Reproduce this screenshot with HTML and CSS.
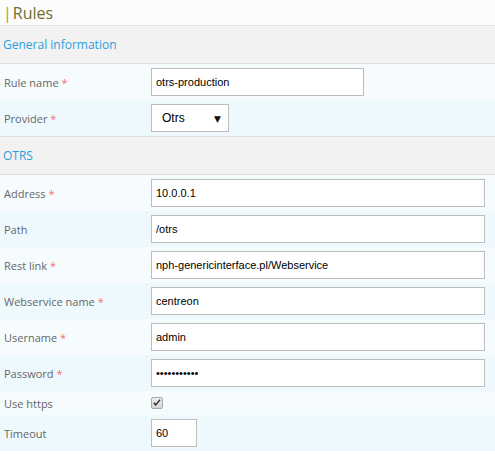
FILE: index.html
```html
<!DOCTYPE html>
<html>
<head>
<meta charset="utf-8">
<link rel="stylesheet" href="styles.css">
</head>
<body>
<div class="title"><span class="bar">|</span>Rules</div>
<div class="section">General information</div>
<div class="row odd"><label>Rule name <span class="req">*</span></label><div class="field"><input class="txt w-md" value="otrs-production"></div></div>
<div class="row even"><label>Provider <span class="req">*</span></label><div class="field"><span class="sel"><select><option>Otrs</option></select></span></div></div>
<div class="section">OTRS</div>
<div class="row odd"><label>Address <span class="req">*</span></label><div class="field"><input class="txt w-lg" value="10.0.0.1"></div></div>
<div class="row even"><label>Path</label><div class="field"><input class="txt w-lg" value="/otrs"></div></div>
<div class="row odd"><label>Rest link <span class="req">*</span></label><div class="field"><input class="txt w-lg" value="nph-genericinterface.pl/Webservice"></div></div>
<div class="row even"><label>Webservice name <span class="req">*</span></label><div class="field"><input class="txt w-lg" value="centreon"></div></div>
<div class="row odd"><label>Username <span class="req">*</span></label><div class="field"><input class="txt w-lg" value="admin"></div></div>
<div class="row even"><label>Password <span class="req">*</span></label><div class="field"><input class="txt w-lg" type="password" value="centreon123"></div></div>
<div class="row odd short"><label>Use https</label><div class="field"><span class="check"><svg viewBox="0 0 12 12" width="10" height="10"><path d="M1.5 6.5 L4.5 9.5 L10.5 2.5 L9 1.5 L4.5 7 L3 5 Z" fill="#333"/></svg></span></div></div>
<div class="row even"><label>Timeout</label><div class="field"><input class="txt w-sm" value="60"></div></div>
</body>
</html>
```

FILE: styles.css
```css
html, body {
  margin: 0;
  padding: 0;
  background: #ffffff;
}
body {
  width: 495px;
  font-family: "Open Sans", "DejaVu Sans", sans-serif;
}
.title {
  height: 26px;
  box-sizing: border-box;
  padding: 2px 0 0 3px;
  font-size: 16px;
  line-height: 22px;
  color: #6f6f2f;
  border-bottom: 1px solid #e2e2e2;
  background: #fcfcfc;
}
.title .bar {
  color: #b59b1e;
  margin-right: 1px;
}
.section {
  height: 37px;
  box-sizing: content-box;
  background: #f2f2f2;
  border-bottom: 1px solid #dedede;
  color: #2b9fdc;
  font-size: 12px;
  line-height: 38px;
  padding-left: 3px;
}
.row {
  display: grid;
  grid-template-columns: 151px 1fr;
  align-items: center;
  height: 36px;
}
.row.short {
  height: 24px;
}
.row + .section {
  border-top: 1px solid #dedede;
}
.odd { background: #f6fcfe; }
.even { background: #eef9fe; }
.row label {
  padding-left: 4px;
  font-size: 11px;
  color: #666666;
}
.req {
  color: #f07070;
}
.field {
  display: flex;
  align-items: center;
}
.txt {
  box-sizing: border-box;
  height: 28px;
  border: 1px solid #bdbdbd;
  background: #ffffff;
  padding: 0 4px;
  font-family: "Liberation Sans", Arial, sans-serif;
  font-size: 11px;
  color: #000000;
  outline: none;
  margin: 0;
}
.w-md { width: 213px; }
.w-lg { width: 334px; }
.w-sm { width: 46px; }
.sel {
  position: relative;
  display: inline-block;
}
.sel select {
  appearance: none;
  -webkit-appearance: none;
  box-sizing: border-box;
  width: 78px;
  height: 28px;
  border: 1px solid #bdbdbd;
  background: #ffffff;
  padding: 0 0 0 10px;
  font-family: "Liberation Sans", Arial, sans-serif;
  font-size: 12px;
  color: #000;
  border-radius: 0;
  margin: 0;
}
.sel::after {
  content: "\25BC";
  position: absolute;
  right: 8px;
  top: 8px;
  font-size: 9px;
  color: #111;
  pointer-events: none;
}
.check {
  box-sizing: border-box;
  width: 12px;
  height: 12px;
  border: 1px solid #a8a8a8;
  border-radius: 2px;
  background: linear-gradient(#ececec, #d6d6d6);
  display: flex;
  align-items: center;
  justify-content: center;
}
```
